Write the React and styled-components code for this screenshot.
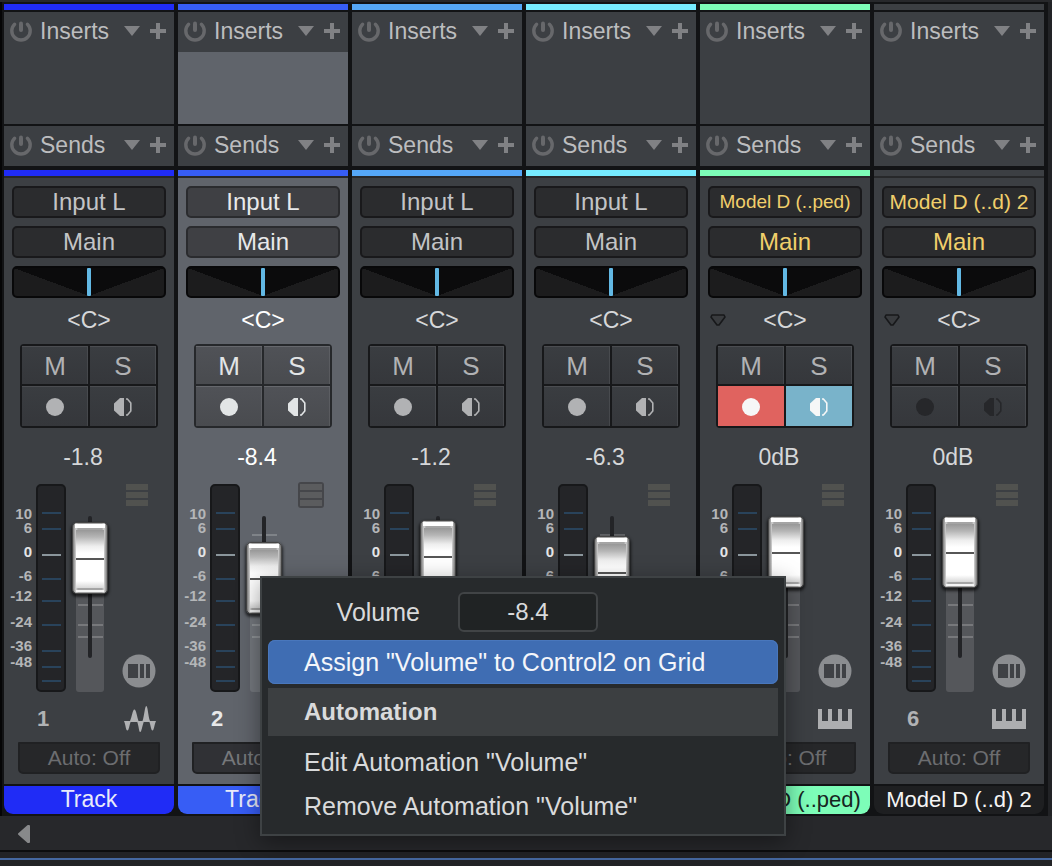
import React from "react";
import styled, { createGlobalStyle, css } from "styled-components";

const GlobalStyle = createGlobalStyle`
  *, *::before, *::after { box-sizing: border-box; }
  body {
    margin: 0;
    background: #222326;
    font-family: "Liberation Sans", Arial, sans-serif;
    font-size: 23px;
    line-height: 26px;
    color: #c3c4c6;
  }
  button, input { font: inherit; color: inherit; margin: 0; padding: 0; }
  button { background: none; border: 0; display: flex; align-items: center; justify-content: center; }
  svg { display: block; }
`;

const Mixer = styled.main`
  position: relative;
  min-height: 100vh;
  border-top: 2px solid #27282b;
  overflow: hidden;
`;

const Console = styled.section`
  display: grid;
  grid-template-columns: repeat(6, minmax(170px, 1fr));
  gap: 4px;
  margin-right: 4px;
  padding: 2px 4px 2px 2px;
  border-left: 2px solid #050506;
  background: #121315;
`;

const Channel = styled.article`
  display: flex;
  flex-direction: column;
  color: ${(p) => (p.$selected ? "#e8e9ea" : "#c3c4c6")};
`;

const ColorBar = styled.div`
  height: 6px;
  background: ${(p) => p.$color};
`;

const Rack = styled.div`
  height: ${(p) => (p.$tall ? "112px" : "40px")};
  margin-top: 2px;
  margin-bottom: ${(p) => (p.$tall ? "0" : "4px")};
  background: ${(p) =>
    p.$tall && p.$selected ? "linear-gradient(#3c3f43 40px, #60646b 40px)" : "#3c3f43"};
`;

const RackHeader = styled.header`
  display: flex;
  align-items: center;
  height: 38px;
  padding: 0 8px 0 6px;
  color: #808184;
`;

const RackTitle = styled.span`
  flex: 1;
  padding-left: 8px;
  color: #bcbdbf;
`;

const PlusButton = styled.button`
  margin-left: 10px;
`;

const Strip = styled.div`
  display: flex;
  flex-direction: column;
  padding: 8px 8px 10px;
  border-top: 2px solid #27282a;
  background: ${(p) => (p.$selected ? "#60646b" : "#3c3f43")};
`;

const RouteButton = styled.button`
  height: 32px;
  margin-bottom: 8px;
  border: 2px solid ${(p) => (p.$selected ? "#2a2b2e" : "#19191b")};
  border-radius: 5px;
  background: ${(p) => (p.$selected ? "#3f4044" : "#2b2c2e")};
  color: ${(p) => (p.$instrument ? "#f1cf6b" : "inherit")};
  font-size: ${(p) => (p.$long ? (p.$long === "wide" ? "19px" : "21px") : "24px")};
  white-space: nowrap;
`;

const PanSlider = styled.input`
  appearance: none;
  width: 100%;
  height: 32px;
  border: 2px solid #080809;
  border-radius: 5px;
  background:
    linear-gradient(to top right, #1c1c1d 50%, transparent 50%) left / 50% 100% no-repeat,
    linear-gradient(to top left, #1c1c1d 50%, transparent 50%) right / 50% 100% no-repeat,
    #0b0b0c;
  &::-webkit-slider-thumb {
    appearance: none;
    width: 4px;
    height: 28px;
    border-radius: 1px;
    background: #62b8e4;
  }
`;

const PanRow = styled.div`
  display: grid;
  grid-template-columns: 20px 1fr 20px;
  align-items: center;
  height: 46px;
  padding-bottom: 2px;
  text-align: center;
  color: ${(p) => (p.$selected ? "#ffffff" : "#d6d7d9")};
`;

const SwitchGrid = styled.div`
  display: grid;
  grid-template: 38px 40px / 1fr 1fr;
  gap: 2px;
  margin: 0 8px;
  border: 2px solid ${(p) => (p.$selected ? "#26282b" : "#17181a")};
  border-radius: 4px;
  background: ${(p) => (p.$selected ? "#26282b" : "#17181a")};
`;

const Switch = styled.button`
  padding-top: 2px;
  font-size: 26px;
  background: ${(p) => (p.$selected ? "linear-gradient(#505257, #494b4f)" : "linear-gradient(#3a3d41, #35373b)")};
  box-shadow: inset 0 1px 0 ${(p) => (p.$selected ? "#66686d" : "#4b4d51")}, inset -1px 0 0 rgba(255, 255, 255, 0.08);
  color: ${(p) => (p.$selected ? "#e2e5e6" : "#b1b2b4")};
  ${(p) => p.$dim && css`
    svg { color: #26272a; }
  `}
  ${(p) => p.$on && css`
    background: ${p.$on};
    color: #f6f7f7;
    box-shadow: none;
  `}
`;

const Level = styled.output`
  height: 54px;
  padding: 16px 12px 0 0;
  text-align: center;
  color: ${(p) => (p.$selected ? "#ffffff" : "#d6d7d9")};
`;

const FaderSection = styled.div`
  display: grid;
  grid-template-columns: 28px 30px 38px 44px;
  column-gap: 4px;
  align-self: center;
  width: 170px;
  height: 210px;
  margin: 0 -8px;
`;

const Scale = styled.ul`
  margin: 0;
  padding: 25px 0 0;
  list-style: none;
  text-align: right;
  font-size: 15px;
  line-height: 14px;
  font-weight: bold;
  color: #b4b6b8;
`;

const ScaleMark = styled.li`
  height: ${(p) => p.$span}px;
  color: ${(p) => (p.$zero ? "#e4e5e6" : "inherit")};
`;

const Meter = styled.div`
  height: 208px;
  margin-top: 2px;
  border: 2px solid #17181a;
  border-radius: 5px;
  background: #242528;
`;

const FaderWell = styled.div`
  display: grid;
  height: 208px;
  margin: 2px 0 0 2px;
  width: 36px;
  & > * { grid-area: 1 / 1; }
`;

const FaderInput = styled.input`
  appearance: none;
  writing-mode: vertical-lr;
  direction: rtl;
  width: 36px;
  height: 208px;
  background: transparent;
  &::-webkit-slider-thumb {
    appearance: none;
    width: 36px;
    height: 72px;
    border: 1px solid #454545;
    border-radius: 5px;
    background:
      linear-gradient(#ffffff, #ffffff) 50% 1px / 30px 4px no-repeat,
      linear-gradient(#565656, #565656) 50% 35px / 28px 2px no-repeat,
      linear-gradient(#f4f4f4, #f4f4f4) 50% 67px / 28px 2px no-repeat,
      linear-gradient(#989898, #b5b5b5 12%, #eeeeee 28%, #ffffff 40%, #ffffff 88%, #d8d8d8) 50% 7px / 28px 58px no-repeat,
      linear-gradient(90deg, #777777, #d5d5d5 3px, #a5a5a5 5px, #a5a5a5 29px, #d5d5d5 31px, #777777);
    box-shadow: 0 2px 3px 1px rgba(0, 0, 0, 0.65);
  }
`;

const FaderTools = styled.div`
  display: flex;
  flex-direction: column;
  align-items: flex-end;
  justify-content: space-between;
  height: 206px;
`;

const StackButton = styled.button`
  width: 26px;
  height: 26px;
  margin-right: 6px;
  flex-direction: column;
  gap: 2px;
  border: 2px solid ${(p) => (p.$selected ? "#45464a" : "transparent")};
  border-radius: 3px;
  background: ${(p) => (p.$selected ? "#45464a" : "transparent")};
`;

const StackBar = styled.span`
  width: 22px;
  height: 6px;
  background: ${(p) => (p.$selected ? "#5b5c5e" : "#51524f")};
`;

const InfoRow = styled.div`
  display: flex;
  align-items: center;
  justify-content: space-between;
  height: 50px;
  padding: 4px 10px 0 25px;
  font-size: 22px;
  font-weight: bold;
  color: ${(p) => (p.$selected ? "#e8e9ea" : "#b1b2b4")};
`;

const AutoButton = styled.button`
  height: 32px;
  margin: 0 6px;
  border: 2px solid #202123;
  border-radius: 1px 1px 5px 5px;
  background: ${(p) => (p.$selected ? "#303135" : "#262729")};
  color: ${(p) => (p.$selected ? "#76787b" : "#6c6d70")};
  font-size: 21px;
`;

const ChannelName = styled.h2`
  height: 28px;
  margin: 2px 0 0;
  border-radius: 0 0 9px 9px;
  background: ${(p) => p.$color};
  color: ${(p) => p.$text};
  font-size: ${(p) => (p.$long ? "22px" : "23px")};
  font-weight: normal;
  line-height: 27px;
  text-align: center;
  white-space: nowrap;
`;

const ScrollBar = styled.footer`
  display: flex;
  align-items: center;
  height: 36px;
  padding: 2px 18px 0;
  border-bottom: 2px solid #0c0d0e;
  background: #27282b;
`;

const BottomEdge = styled.div`
  height: 8px;
  border-bottom: 2px solid #4568a0;
`;

const ContextMenu = styled.div`
  position: absolute;
  left: 260px;
  top: 574px;
  width: 526px;
  padding: 14px 6px 6px;
  border: 2px solid #3e4244;
  background: #272a2c;
  box-shadow: 0 6px 22px rgba(0, 0, 0, 0.4);
  font-size: 25px;
  color: #d9dadb;
`;

const VolumeRow = styled.div`
  display: grid;
  grid-template-columns: 152px 140px;
  column-gap: 38px;
  align-items: center;
  margin-bottom: 8px;
  text-align: right;
`;

const VolumeInput = styled.input`
  width: 140px;
  height: 40px;
  border: 2px solid #414446;
  border-radius: 6px;
  background: #202324;
  font-size: 24px;
  text-align: center;
`;

const MenuItem = styled.button`
  justify-content: flex-start;
  width: 100%;
  height: 44px;
  padding-left: 36px;
  white-space: nowrap;
  ${(p) => p.$active && css`
    border-radius: 7px;
    background: #3f6db3;
    box-shadow: inset 0 0 0 1px #4977bc;
    color: #f4f6fa;
  `}
`;

const MenuHeading = styled.h3`
  margin: 4px 0;
  padding-left: 36px;
  background: #3c3f41;
  font-size: 24px;
  line-height: 48px;
`;

const PowerIcon = () => (
  <svg width="22" height="22" viewBox="0 0 22 22" fill="none" stroke="#67686b" strokeLinecap="round">
    <path d="M4.600 4.200A9.200 9.200 0 1 0 17.400 4.200" strokeWidth="3.4" />
    <path d="M11 3.500v6.500" strokeWidth="4" />
  </svg>
);

const DownIcon = () => (
  <svg width="16" height="10" viewBox="0 0 16 10"><path d="M0 0h16L8 10z" fill="#808184" /></svg>
);

const PlusIcon = () => (
  <svg width="16" height="16" viewBox="0 0 16 16"><path d="M6 0h4v6h6v4h-6v6H6v-6H0V6h6z" fill="#808184" /></svg>
);

const ExpandIcon = () => (
  <svg width="16" height="12" viewBox="0 0 16 12">
    <path d="M2 1h12l1 2-6 8H7L1 3z" fill="#393b3e" stroke="#17181a" strokeWidth="1.6" strokeLinejoin="round" />
  </svg>
);

const RecordIcon = () => (
  <svg width="20" height="20" viewBox="0 0 20 20"><circle cx="10" cy="10" r="9" fill="currentColor" /></svg>
);

const MonitorIcon = () => (
  <svg width="18" height="18" viewBox="0 0 18 18">
    <path d="M10 0H6L0 5.5v7L6 18h4z" fill="currentColor" />
    <path d="M12 1h1.400L16.800 5v8l-3.400 4H12" fill="none" stroke="currentColor" strokeWidth="1.6" />
  </svg>
);

const RoundIcon = () => (
  <svg width="34" height="34" viewBox="0 0 34 34">
    <circle cx="17" cy="17" r="16.5" fill="#8b8d90" />
    <path d="M6 10h10v14H6zM18 10h4v14h-4zM24 10h4v14h-4z" fill="#3f4145" />
  </svg>
);

const WaveIcon = () => (
  <svg width="32" height="26" viewBox="0 0 32 26" fill="#b0b1b3">
    <path d="M0 15h7C5 20 5 24.5 3.4 24.5S2 20 0 15zM6 15C8 11 8.600 3.500 10.400 3.500S13 11 14.500 15v1H6zM13 15h7C18 21 17.500 26 16.200 26S15 21 13 15zM18.500 15C20.400 10 20.700 0 22.300 0S24 10 26 15v1h-7.500zM25 15h7c-2 5-2 9.500-3.500 9.500S27 20 25 15z" />
  </svg>
);

const KeysIcon = () => (
  <svg width="34" height="20" viewBox="0 0 34 20">
    <path d="M0 0h4v12h6V0h4v12h6V0h4v12h6V0h4v20H0z" fill="#adaeb0" />
  </svg>
);

const MeterTicks = () => (
  <svg width="26" height="204" viewBox="0 0 26 204">
    {[27, 43, 69, 93, 115, 139, 165, 181, 195].map((y) => (
      <rect key={y} x="4" y={y - 1} width="19" height="2" fill={y === 69 ? "#8b969c" : "#29435b"} />
    ))}
  </svg>
);

const FaderTrack = ({ top }) => (
  <svg width="36" height="208" viewBox="0 0 36 208">
    <rect x="4" y={top + 10} width="28" height={198 - top} rx="3" fill="#ffffff" fillOpacity="0.13" />
    <rect x="16" y="32" width="4" height="142" rx="2" fill="#232427" />
    {[51, 121, 141, 153].map((y) => (
      <path key={y} d={`M6 ${y}h10M20 ${y}h11`} stroke="#ffffff" strokeOpacity="0.2" strokeWidth="2" />
    ))}
  </svg>
);

const SCALE = [
  ["10", 14], ["6", 24], ["0", 24], ["-6", 20], ["-12", 26], ["-24", 24], ["-36", 16], ["-48", 14],
];

const CHANNELS = [
  { id: 1, name: "Track", input: "Input L", color: "#202cf6", level: "-1.8", top: 38 },
  { id: 2, name: "Track 2", input: "Input L", color: "#375df5", level: "-8.4", top: 58, selected: true },
  { id: 3, name: "Track 3", input: "Input L", color: "#55a7f7", level: "-1.2", top: 36 },
  { id: 4, name: "Track 4", input: "Input L", color: "#76ebff", level: "-6.3", top: 52 },
  { id: 5, name: "Model D (..ped)", input: "Model D (..ped)", long: "wide", color: "#7dfdb8", text: "#17251f", level: "0dB", top: 32, instrument: true, armed: true },
  { id: 6, name: "Model D (..d) 2", input: "Model D (..d) 2", long: "normal", color: "#3c3f43", nameColor: "#1e1f21", text: "#f5f5f5", level: "0dB", top: 32, instrument: true, dim: true },
];

function RackPanel({ title, tall, selected }) {
  return (
    <Rack $tall={tall} $selected={selected}>
      <RackHeader>
        <button aria-label={`${title} power`}><PowerIcon /></button>
        <RackTitle>{title}</RackTitle>
        <button aria-label={`${title} menu`}><DownIcon /></button>
        <PlusButton aria-label={`Add to ${title}`}><PlusIcon /></PlusButton>
      </RackHeader>
    </Rack>
  );
}

function ChannelStrip({ channel: c }) {
  const s = c.selected;
  return (
    <Channel $selected={s}>
      <ColorBar $color={c.color} />
      <RackPanel title="Inserts" tall selected={s} />
      <RackPanel title="Sends" />
      <ColorBar $color={c.color} />
      <Strip $selected={s}>
        <RouteButton $selected={s} $instrument={c.instrument} $long={c.long}>{c.input}</RouteButton>
        <RouteButton $selected={s} $instrument={c.instrument}>Main</RouteButton>
        <PanSlider type="range" min="-100" max="100" defaultValue="0" aria-label={`Pan ${c.id}`} />
        <PanRow $selected={s}>
          {c.instrument ? <button aria-label="Expand"><ExpandIcon /></button> : <span />}
          <span>&lt;C&gt;</span>
        </PanRow>
        <SwitchGrid $selected={s}>
          <Switch $selected={s}>M</Switch>
          <Switch $selected={s}>S</Switch>
          <Switch $selected={s} $dim={c.dim} $on={c.armed && "#e0635f"} aria-label="Record"><RecordIcon /></Switch>
          <Switch $selected={s} $dim={c.dim} $on={c.armed && "#79b3ca"} aria-label="Monitor"><MonitorIcon /></Switch>
        </SwitchGrid>
        <Level $selected={s}>{c.level}</Level>
        <FaderSection>
          <Scale>
            {SCALE.map(([label, span]) => (
              <ScaleMark key={label} $span={span} $zero={label === "0"}>{label}</ScaleMark>
            ))}
          </Scale>
          <Meter><MeterTicks /></Meter>
          <FaderWell>
            <FaderTrack top={c.top} />
            <FaderInput type="range" min="0" max="136" defaultValue={136 - c.top} aria-label={`Volume ${c.id}`} aria-valuetext={c.level} />
          </FaderWell>
          <FaderTools>
            <StackButton $selected={s} aria-label="Layers">
              <StackBar $selected={s} /><StackBar $selected={s} /><StackBar $selected={s} />
            </StackButton>
            <button aria-label="Channel editor"><RoundIcon /></button>
          </FaderTools>
        </FaderSection>
        <InfoRow $selected={s}>
          <span>{c.id}</span>
          {c.instrument ? <KeysIcon /> : <WaveIcon />}
        </InfoRow>
        <AutoButton $selected={s}>Auto: Off</AutoButton>
      </Strip>
      <ChannelName $long={c.long} $color={c.nameColor || c.color} $text={c.text || "#e9ebfa"}>{c.name}</ChannelName>
    </Channel>
  );
}

export default function App() {
  return (
    <>
      <GlobalStyle />
      <Mixer>
        <Console>
          {CHANNELS.map((c) => <ChannelStrip key={c.id} channel={c} />)}
        </Console>
        <ScrollBar>
          <button aria-label="Scroll left">
            <svg width="12" height="18" viewBox="0 0 12 18"><path d="M1 9L10 1h1v16h-1z" fill="#88898b" stroke="#88898b" strokeWidth="2" strokeLinejoin="round" /></svg>
          </button>
        </ScrollBar>
        <BottomEdge />
        <ContextMenu>
          <VolumeRow>
            <label htmlFor="volume">Volume</label>
            <VolumeInput id="volume" type="text" defaultValue="-8.4" />
          </VolumeRow>
          <MenuItem $active>Assign "Volume" to Control2 on Grid</MenuItem>
          <MenuHeading>Automation</MenuHeading>
          <MenuItem>Edit Automation "Volume"</MenuItem>
          <MenuItem>Remove Automation "Volume"</MenuItem>
        </ContextMenu>
      </Mixer>
    </>
  );
}
